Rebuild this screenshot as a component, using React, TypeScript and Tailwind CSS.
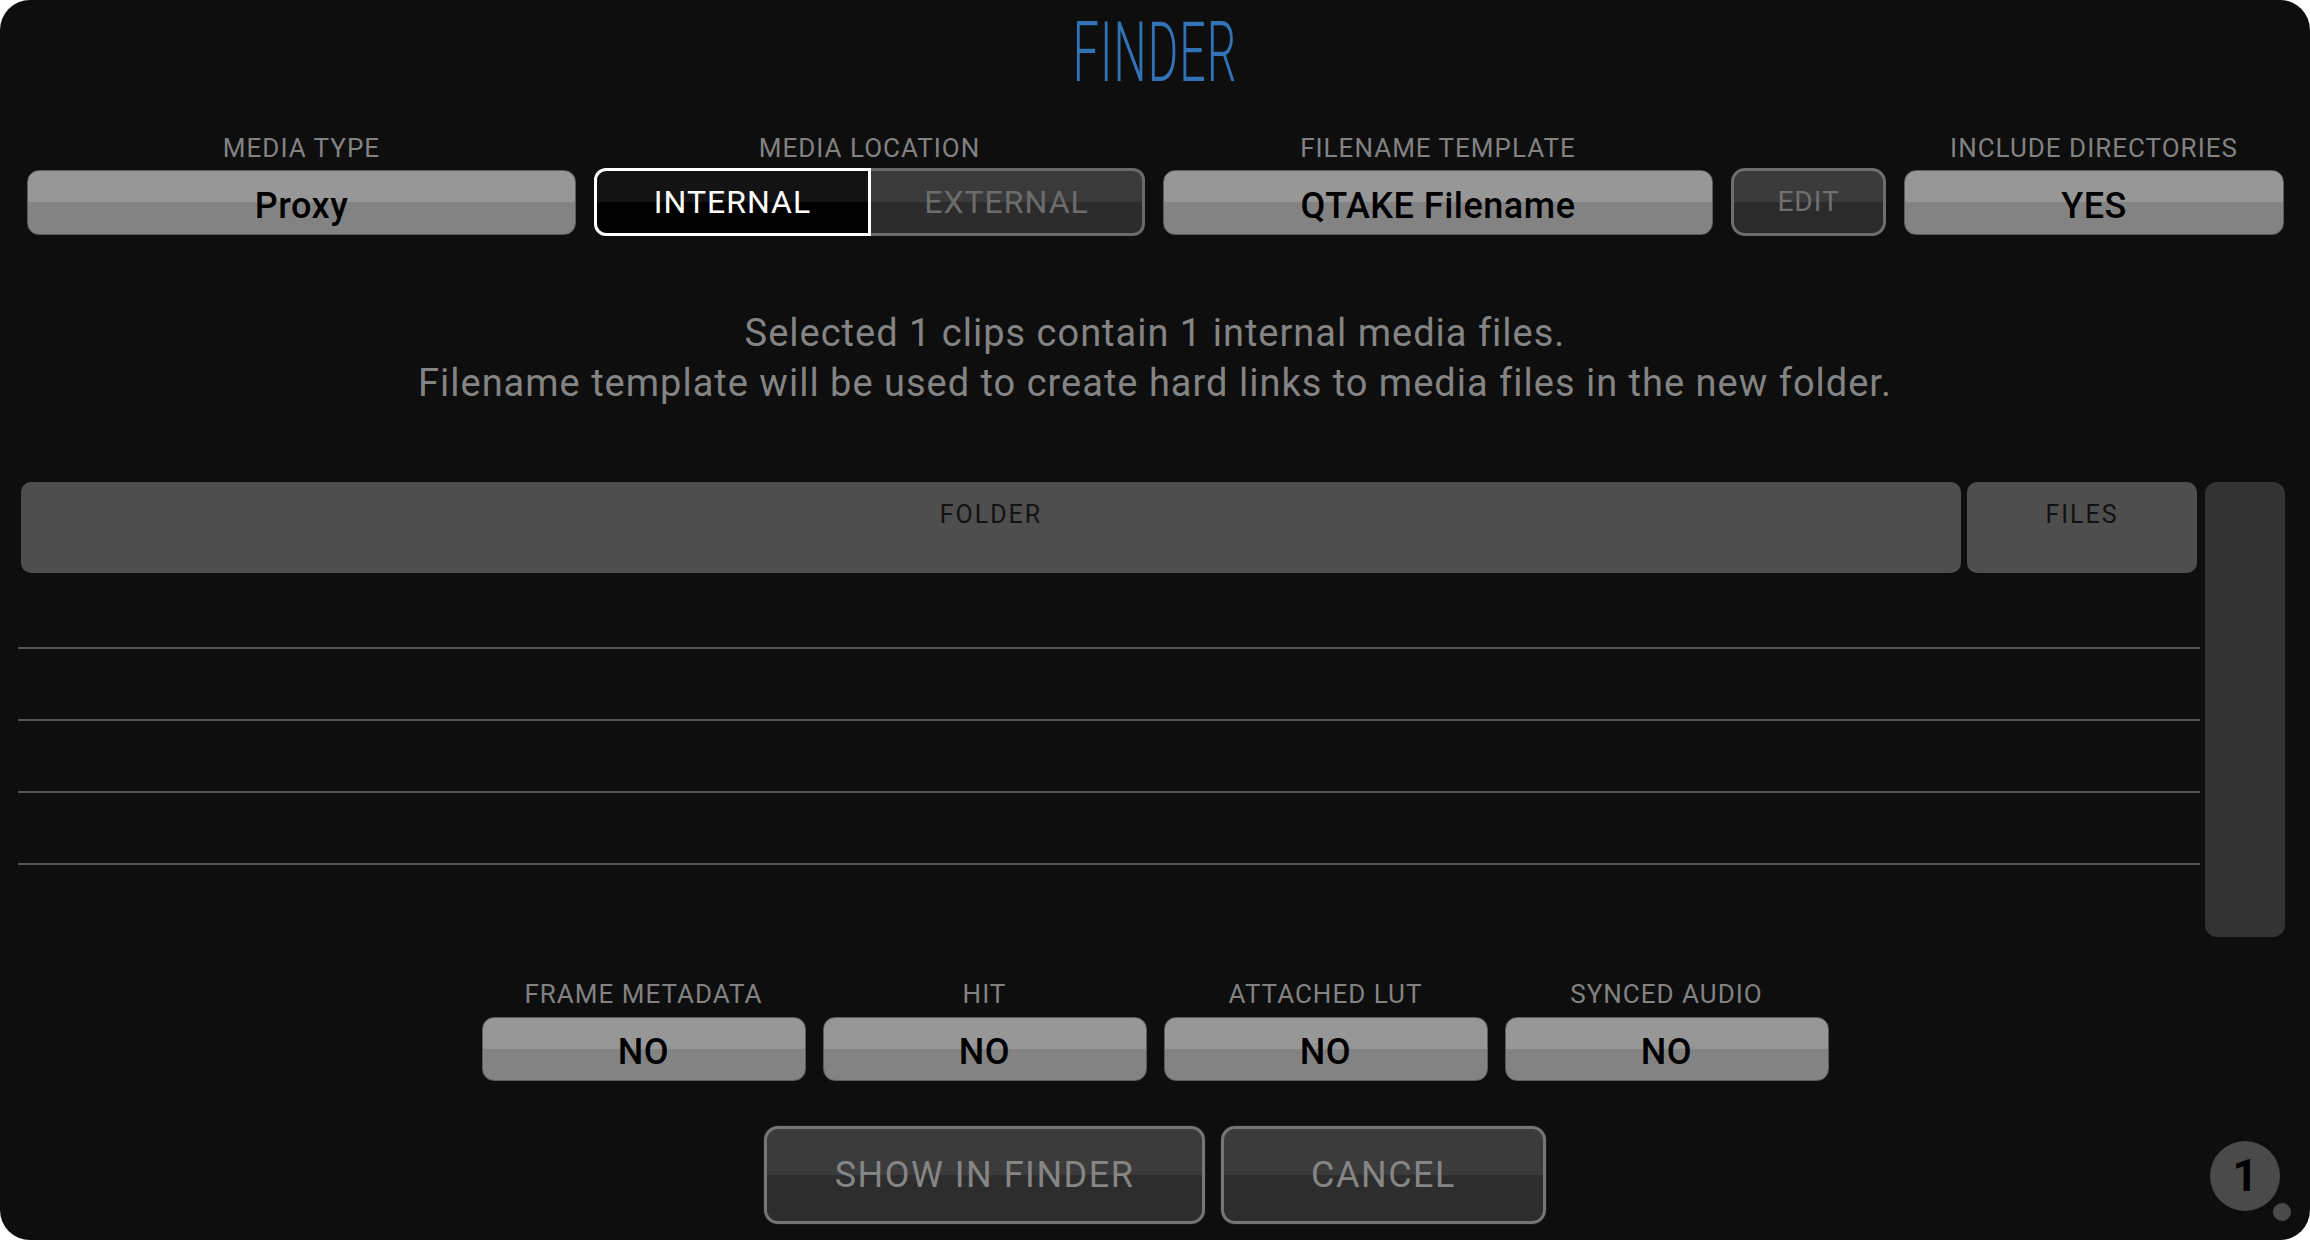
import React from "react";

const FONT = "font-['Roboto',sans-serif]";

function Label({ children }: { children: React.ReactNode }) {
  return (
    <div className="h-[26px] text-[26px] leading-none tracking-[1px] text-[#828282] text-center whitespace-nowrap">
      {children}
    </div>
  );
}

function LightBtn({ children, className }: { children: React.ReactNode; className: string }) {
  return (
    <div
      className={`${className} rounded-[12px] border border-[#5c5c5c] bg-[linear-gradient(to_bottom,#979797_50%,#838383_50%)] flex items-center justify-center pt-[6px]`}
    >
      <span className="text-[36px] font-medium leading-none text-black tracking-[0.5px] whitespace-nowrap">
        {children}
      </span>
    </div>
  );
}

function OptionCol({ label, value }: { label: string; value: string }) {
  return (
    <div className="flex flex-col items-center">
      <Label>{label}</Label>
      <div className="h-[10px]" />
      <LightBtn className="w-[324px] h-[64px]">{value}</LightBtn>
    </div>
  );
}

function DarkBtn({ children, className }: { children: React.ReactNode; className: string }) {
  return (
    <div
      className={`${className} rounded-[14px] border-[3px] border-[#767676] bg-[linear-gradient(to_bottom,#3b3b3b_50%,#2d2d2d_50%)] flex items-center justify-center shadow-[0_0_0_1px_#1a1a1a]`}
    >
      <span className="text-[36px] leading-none tracking-[1.5px] text-[#858585] whitespace-nowrap">
        {children}
      </span>
    </div>
  );
}

export default function App() {
  return (
    <div className={`w-[2310px] h-[1240px] bg-white ${FONT}`}>
      <div className="relative w-full h-full rounded-[30px] bg-[#0e0e0e] overflow-hidden flex flex-col">
        {/* Title */}
        <div className="mt-[11px] h-[83px] flex justify-center">
          <span className="inline-block text-[83px] font-light leading-none text-[#3272b5] scale-x-[0.56] tracking-[2px]">
            FINDER
          </span>
        </div>

        {/* Top controls */}
        <div className="mt-[41px] flex pl-[27px] gap-[18px]">
          <div className="flex flex-col items-center">
            <Label>MEDIA TYPE</Label>
            <div className="h-[9px]" />
            <LightBtn className="w-[549px] h-[65px]">Proxy</LightBtn>
          </div>
          <div className="flex flex-col items-center">
            <Label>MEDIA LOCATION</Label>
            <div className="h-[7px]" />
            <div className="flex w-[551px] h-[68px]">
              <div className="w-[277px] h-full rounded-l-[12px] border-[3px] border-white bg-[linear-gradient(to_bottom,#131313_50%,#000000_50%)] flex items-center justify-center">
                <span className="text-[32px] leading-none tracking-[1px] text-white">INTERNAL</span>
              </div>
              <div className="flex-1 h-full rounded-r-[12px] border-[3px] border-l-0 border-[#6a6a6a] bg-[linear-gradient(to_bottom,#3a3a3a_50%,#2c2c2c_50%)] flex items-center justify-center">
                <span className="text-[32px] leading-none tracking-[1px] text-[#6c6c6c]">EXTERNAL</span>
              </div>
            </div>
          </div>
          <div className="flex flex-col items-center">
            <Label>FILENAME TEMPLATE</Label>
            <div className="h-[9px]" />
            <LightBtn className="w-[550px] h-[65px]">QTAKE Filename</LightBtn>
          </div>
          <div className="flex flex-col items-center">
            <div className="h-[26px]" />
            <div className="h-[7px]" />
            <div className="w-[155px] h-[68px] rounded-[14px] border-[3px] border-[#6e6e6e] bg-[linear-gradient(to_bottom,#3b3b3b_50%,#2b2b2b_50%)] flex items-center justify-center">
              <span className="text-[28px] leading-none tracking-[1px] text-[#707070]">EDIT</span>
            </div>
          </div>
          <div className="flex flex-col items-center">
            <Label>INCLUDE DIRECTORIES</Label>
            <div className="h-[9px]" />
            <LightBtn className="w-[380px] h-[65px]">YES</LightBtn>
          </div>
        </div>

        {/* Info */}
        <div className="mt-[72px] text-center text-[38px] leading-[50px] tracking-[1px] text-[#848484]">
          <div>Selected 1 clips contain 1 internal media files.</div>
          <div>Filename template will be used to create hard links to media files in the new folder.</div>
        </div>

        {/* Table */}
        <div className="mt-[74px] flex pl-[18px] pr-[25px] gap-[5px]">
          <div className="flex-1 flex flex-col">
            <div className="flex gap-[6px] px-[3px]">
              <div className="flex-1 h-[91px] rounded-[10px] bg-[#4e4e4e] flex justify-center pt-[20px]">
                <span className="text-[25px] leading-none tracking-[2px] text-[#121212]">FOLDER</span>
              </div>
              <div className="w-[230px] h-[91px] rounded-[10px] bg-[#4e4e4e] flex justify-center pt-[20px]">
                <span className="text-[25px] leading-none tracking-[2px] text-[#121212]">FILES</span>
              </div>
            </div>
            <div className="mt-[4px] flex flex-col">
              <div className="h-[72px] border-b-2 border-[#555555]" />
              <div className="h-[72px] border-b-2 border-[#555555]" />
              <div className="h-[72px] border-b-2 border-[#555555]" />
              <div className="h-[72px] border-b-2 border-[#555555]" />
            </div>
          </div>
          <div className="w-[80px] h-[455px] rounded-[12px] bg-[#333333]" />
        </div>

        {/* Options */}
        <div className="mt-[44px] flex justify-center gap-[17px]">
          <OptionCol label="FRAME METADATA" value="NO" />
          <OptionCol label="HIT" value="NO" />
          <OptionCol label="ATTACHED LUT" value="NO" />
          <OptionCol label="SYNCED AUDIO" value="NO" />
        </div>

        {/* Actions */}
        <div className="mt-[45px] flex justify-center gap-[16px]">
          <DarkBtn className="w-[441px] h-[98px]">SHOW IN FINDER</DarkBtn>
          <DarkBtn className="w-[325px] h-[98px]">CANCEL</DarkBtn>
        </div>

        {/* Badge */}
        <div className="absolute right-[30px] bottom-[29px] w-[70px] h-[70px] rounded-full bg-[#4a4a4a] flex items-center justify-center">
          <span className="text-[44px] font-bold leading-none text-black">1</span>
        </div>
        <div className="absolute right-[19px] bottom-[19px] w-[18px] h-[18px] rounded-full bg-[#4a4a4a]" />
      </div>
    </div>
  );
}
